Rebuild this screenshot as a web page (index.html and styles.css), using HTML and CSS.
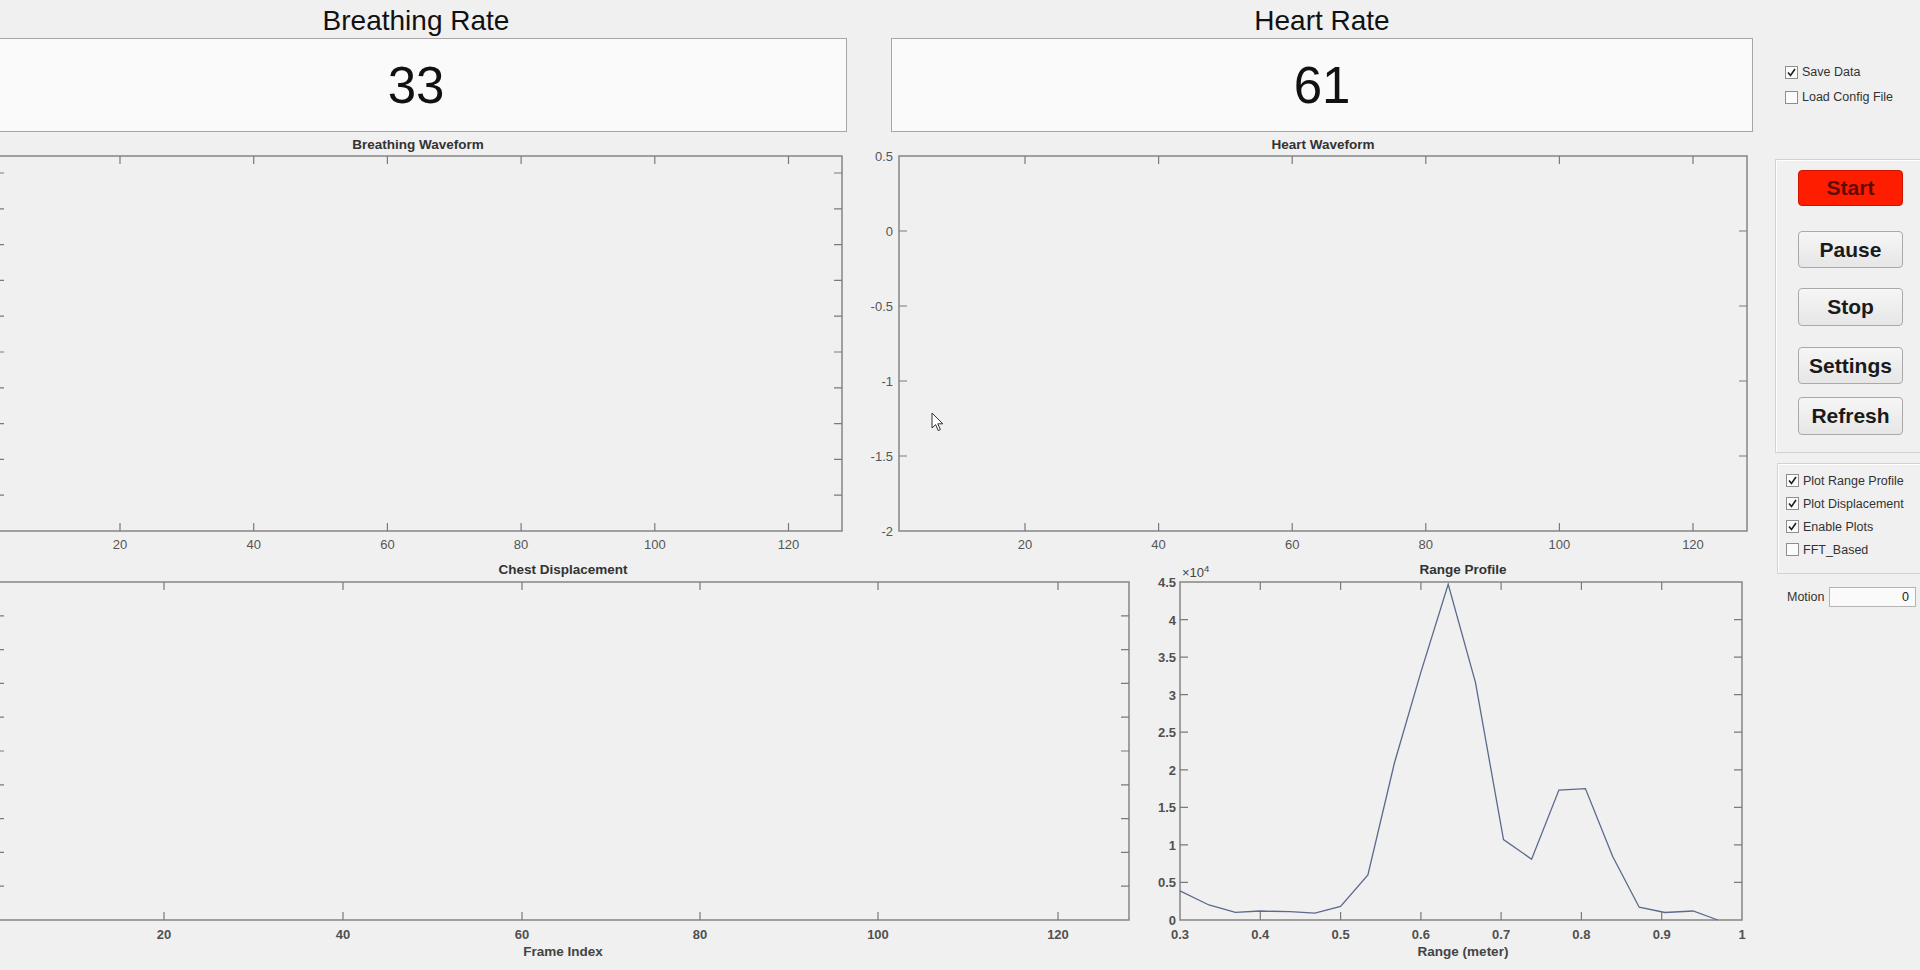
FILE: index.html
```html
<!DOCTYPE html>
<html>
   <head>
      <meta charset="UTF-8">
      <meta name="viewport" content="width=device-width, initial-scale=1.0"/>
      <title>Vital Signs Monitor</title>
      <link rel="stylesheet" href="styles.css">
   </head>
   <body>
      <div class="figure">
         <div class="main">
            <div class="rates">
               <div class="rate">
                  <div class="rate-title">Breathing Rate</div>
                  <div class="rate-box">33</div>
               </div>
               <div class="rate">
                  <div class="rate-title">Heart Rate</div>
                  <div class="rate-box">61</div>
               </div>
            </div>

            <div class="plots plots-top">
               <svg class="plot" width="870" height="422" viewBox="0 0 870 422">
                  <text class="ptitle" x="438" y="15">Breathing Waveform</text>
                  <rect class="axis" x="16" y="22" width="846" height="375"/>
                  <path class="tick" d="M140 22v8M140 397v-8M273.7 22v8M273.7 397v-8M407.4 22v8M407.4 397v-8M541.1 22v8M541.1 397v-8M674.8 22v8M674.8 397v-8M808.5 22v8M808.5 397v-8"/>
                  <path class="tick" d="M16 361.2h8M16 325.4h8M16 289.6h8M16 253.8h8M16 218h8M16 182.2h8M16 146.4h8M16 110.6h8M16 74.8h8M16 39h8M862 361.2h-8M862 325.4h-8M862 289.6h-8M862 253.8h-8M862 218h-8M862 182.2h-8M862 146.4h-8M862 110.6h-8M862 74.8h-8M862 39h-8"/>
                  <g class="tlabel xl">
                     <text x="140" y="415">20</text>
                     <text x="273.7" y="415">40</text>
                     <text x="407.4" y="415">60</text>
                     <text x="541.1" y="415">80</text>
                     <text x="674.8" y="415">100</text>
                     <text x="808.5" y="415">120</text>
                  </g>
               </svg>

               <svg class="plot" width="910" height="422" viewBox="0 0 910 422">
                  <text class="ptitle" x="473" y="15">Heart Waveform</text>
                  <rect class="axis" x="49" y="22" width="848" height="375"/>
                  <path class="tick" d="M175 22v8M175 397v-8M308.6 22v8M308.6 397v-8M442.2 22v8M442.2 397v-8M575.8 22v8M575.8 397v-8M709.4 22v8M709.4 397v-8M843 22v8M843 397v-8"/>
                  <path class="tick" d="M49 97h8M49 172h8M49 247h8M49 322h8M897 97h-8M897 172h-8M897 247h-8M897 322h-8"/>
                  <g class="tlabel yl">
                     <text x="43" y="27">0.5</text>
                     <text x="43" y="102">0</text>
                     <text x="43" y="177">-0.5</text>
                     <text x="43" y="252">-1</text>
                     <text x="43" y="327">-1.5</text>
                     <text x="43" y="402">-2</text>
                  </g>
                  <g class="tlabel xl">
                     <text x="175" y="415">20</text>
                     <text x="308.6" y="415">40</text>
                     <text x="442.2" y="415">60</text>
                     <text x="575.8" y="415">80</text>
                     <text x="709.4" y="415">100</text>
                     <text x="843" y="415">120</text>
                  </g>
               </svg>
            </div>

            <div class="plots plots-bottom">
               <svg class="plot" width="1160" height="414" viewBox="0 0 1160 414">
                  <text class="ptitle" x="583" y="18">Chest Displacement</text>
                  <rect class="axis" x="16" y="26" width="1133" height="338"/>
                  <path class="tick" d="M184 26v8M184 364v-8M363 26v8M363 364v-8M542 26v8M542 364v-8M720 26v8M720 364v-8M898 26v8M898 364v-8M1078 26v8M1078 364v-8"/>
                  <path class="tick" d="M16 330.2h8M16 296.4h8M16 262.6h8M16 228.8h8M16 195h8M16 161.2h8M16 127.4h8M16 93.6h8M16 59.8h8M1149 330.2h-8M1149 296.4h-8M1149 262.6h-8M1149 228.8h-8M1149 195h-8M1149 161.2h-8M1149 127.4h-8M1149 93.6h-8M1149 59.8h-8"/>
                  <g class="tlabel tlabel-bold xl">
                     <text x="184" y="383">20</text>
                     <text x="363" y="383">40</text>
                     <text x="542" y="383">60</text>
                     <text x="720" y="383">80</text>
                     <text x="898" y="383">100</text>
                     <text x="1078" y="383">120</text>
                  </g>
                  <text class="xlabel" x="583" y="400">Frame Index</text>
               </svg>

               <svg class="plot" width="630" height="414" viewBox="0 0 630 414">
                  <text class="ptitle" x="323" y="18">Range Profile</text>
                  <text class="expo" x="42" y="21">×10<tspan dy="-5" font-size="9.5">4</tspan></text>
                  <rect class="axis" x="40" y="26" width="562" height="338"/>
                  <path class="tick" d="M120.3 26v8M120.3 364v-8M200.6 26v8M200.6 364v-8M280.9 26v8M280.9 364v-8M361.1 26v8M361.1 364v-8M441.4 26v8M441.4 364v-8M521.7 26v8M521.7 364v-8"/>
                  <path class="tick" d="M40 326.4h8M40 288.9h8M40 251.3h8M40 213.8h8M40 176.2h8M40 138.7h8M40 101.1h8M40 63.6h8M602 326.4h-8M602 288.9h-8M602 251.3h-8M602 213.8h-8M602 176.2h-8M602 138.7h-8M602 101.1h-8M602 63.6h-8"/>
                  <g class="tlabel tlabel-bold yl">
                     <text x="36" y="31">4.5</text>
                     <text x="36" y="68.6">4</text>
                     <text x="36" y="106.1">3.5</text>
                     <text x="36" y="143.7">3</text>
                     <text x="36" y="181.2">2.5</text>
                     <text x="36" y="218.8">2</text>
                     <text x="36" y="256.3">1.5</text>
                     <text x="36" y="293.9">1</text>
                     <text x="36" y="331.4">0.5</text>
                     <text x="36" y="369">0</text>
                  </g>
                  <g class="tlabel tlabel-bold xl">
                     <text x="40" y="383">0.3</text>
                     <text x="120.3" y="383">0.4</text>
                     <text x="200.6" y="383">0.5</text>
                     <text x="280.9" y="383">0.6</text>
                     <text x="361.1" y="383">0.7</text>
                     <text x="441.4" y="383">0.8</text>
                     <text x="521.7" y="383">0.9</text>
                     <text x="602" y="383">1</text>
                  </g>
                  <text class="xlabel" x="323" y="400">Range (meter)</text>
                  <polyline class="curve" points="40,334.9 68.9,349 95.4,356.3 120.3,355 150,355.7 174.9,357.2 200.6,350.5 227.9,318.9 254.4,207 280.9,116.1 308.2,28.3 335.5,126.6 363.5,283.6 391.6,303.2 418.9,234.1 445.4,232.6 472.7,300.5 499.2,351.2 524.9,356.5 553,355 577.9,364"/>
               </svg>
            </div>
         </div>

         <div class="side">
            <div class="top-checks">
               <label class="check"><span class="box"><svg width="11" height="11" viewBox="0 0 11 11"><path d="M2 5.5l2.5 3L9 2"/></svg></span>Save Data</label>
               <label class="check"><span class="box"></span>Load Config File</label>
            </div>

            <div class="panel panel-buttons">
               <button class="btn btn-start">Start</button>
               <button class="btn btn-pause">Pause</button>
               <button class="btn btn-stop">Stop</button>
               <button class="btn btn-settings">Settings</button>
               <button class="btn btn-refresh">Refresh</button>
            </div>

            <div class="panel panel-options">
               <label class="check"><span class="box"><svg width="11" height="11" viewBox="0 0 11 11"><path d="M2 5.5l2.5 3L9 2"/></svg></span>Plot Range Profile</label>
               <label class="check"><span class="box"><svg width="11" height="11" viewBox="0 0 11 11"><path d="M2 5.5l2.5 3L9 2"/></svg></span>Plot Displacement</label>
               <label class="check"><span class="box"><svg width="11" height="11" viewBox="0 0 11 11"><path d="M2 5.5l2.5 3L9 2"/></svg></span>Enable Plots</label>
               <label class="check"><span class="box"></span>FFT_Based</label>
            </div>

            <div class="motion">
               <span class="motion-label">Motion</span>
               <span class="motion-value">0</span>
            </div>
         </div>
      </div>

      <svg class="cursor" width="14" height="21" viewBox="0 0 14 21">
         <path d="M1 1v15l3.6-3.4 2.6 6 2.2-1-2.6-5.8h5z"/>
      </svg>
   </body>
</html>
```

FILE: styles.css
```css
*
{
   box-sizing: border-box;
}

html,
body
{
   margin: 0;
   width: 1920px;
   height: 970px;
   overflow: hidden;
}

body
{
   background: #f0f0f0;
   font-family: "Liberation Sans", Arial, sans-serif;
   color: #222222;
}

.figure
{
   display: flex;
   margin-left: -20px;
}

.main
{
   width: 1794px;
   flex: none;
}

.rates
{
   display: flex;
   gap: 44px;
   padding-left: 5px;
   height: 134px;
}

.rate
{
   width: 862px;
}

.rate-title
{
   height: 38px;
   line-height: 41px;
   font-size: 28px;
   text-align: center;
   color: #111111;
}

.rate-box
{
   height: 94px;
   background: #fafafa;
   border: 1px solid #a6a6a6;
   font-size: 51px;
   line-height: 94px;
   text-align: center;
   color: #111111;
}

.plots
{
   display: flex;
}

.plot
{
   display: block;
   flex: none;
}

.axis
{
   fill: none;
   stroke: #858585;
   stroke-width: 1.5;
}

.tick
{
   fill: none;
   stroke: #7a7a7a;
   stroke-width: 1.2;
}

.curve
{
   fill: none;
   stroke: #5b6a8c;
   stroke-width: 1.3;
}

.ptitle
{
   font-family: "Liberation Sans", Arial, sans-serif;
   font-size: 13.5px;
   font-weight: bold;
   fill: #333333;
   text-anchor: middle;
}

.tlabel
{
   font-family: "Liberation Sans", Arial, sans-serif;
   font-size: 13px;
   fill: #555555;
}

.tlabel-bold
{
   font-weight: bold;
   fill: #505050;
}

.xl
{
   text-anchor: middle;
}

.yl
{
   text-anchor: end;
}

.xlabel
{
   font-family: "Liberation Sans", Arial, sans-serif;
   font-size: 13.5px;
   font-weight: bold;
   fill: #444444;
   text-anchor: middle;
}

.expo
{
   font-family: "Liberation Sans", Arial, sans-serif;
   font-size: 13px;
   fill: #444444;
}

/* right hand controls */

.side
{
   width: 170px;
   flex: none;
}

.top-checks
{
   height: 159px;
   padding: 62px 0 0 11px;
}

.top-checks .check
{
   height: 20px;
   margin-bottom: 5px;
}

.check
{
   display: flex;
   align-items: center;
   gap: 4px;
   font-size: 12.5px;
   color: #333333;
   white-space: nowrap;
}

.box
{
   width: 13px;
   height: 13px;
   border: 1px solid #8e8e8e;
   background: #fbfbfb;
   display: flex;
   align-items: center;
   justify-content: center;
   flex: none;
}

.box svg path
{
   fill: none;
   stroke: #1e1e1e;
   stroke-width: 1.6;
}

.panel
{
   border: 1px solid #d2d2d2;
   box-shadow: inset 1px 1px 0 #ffffff;
}

.panel-buttons
{
   margin-left: 1px;
   height: 294px;
   padding: 10px 0 0 22px;
   display: flex;
   flex-direction: column;
}

.btn
{
   width: 105px;
   height: 37px;
   flex: none;
   font-family: "Liberation Sans", Arial, sans-serif;
   font-size: 21px;
   font-weight: bold;
   color: #1a1a1a;
   background: linear-gradient(#f6f6f6, #e6e6e6);
   border: 1px solid #a9a9a9;
   border-radius: 4px;
   padding: 0;
}

.btn-start
{
   height: 36px;
   background: #ff1d00;
   border-color: #d01400;
   color: #5e0c06;
}

.btn-pause
{
   margin-top: 25px;
}

.btn-stop
{
   margin-top: 20px;
   height: 38px;
}

.btn-settings
{
   margin-top: 21px;
}

.btn-refresh
{
   margin-top: 13px;
   height: 38px;
}

.panel-options
{
   margin: 10px 0 0 3px;
   height: 111px;
   padding: 5px 0 0 8px;
}

.panel-options .check
{
   height: 23px;
}

.motion
{
   display: flex;
   align-items: center;
   margin-top: 13px;
   height: 20px;
   padding-left: 13px;
}

.motion-label
{
   font-size: 12.5px;
   color: #333333;
   width: 42px;
}

.motion-value
{
   width: 87px;
   height: 20px;
   background: #fafafa;
   border: 1px solid #b4b4b4;
   font-size: 12.5px;
   line-height: 18px;
   text-align: right;
   padding-right: 6px;
}

.cursor
{
   position: absolute;
   left: 931px;
   top: 412px;
}

.cursor path
{
   fill: #ffffff;
   stroke: #333333;
   stroke-width: 1;
}
```
